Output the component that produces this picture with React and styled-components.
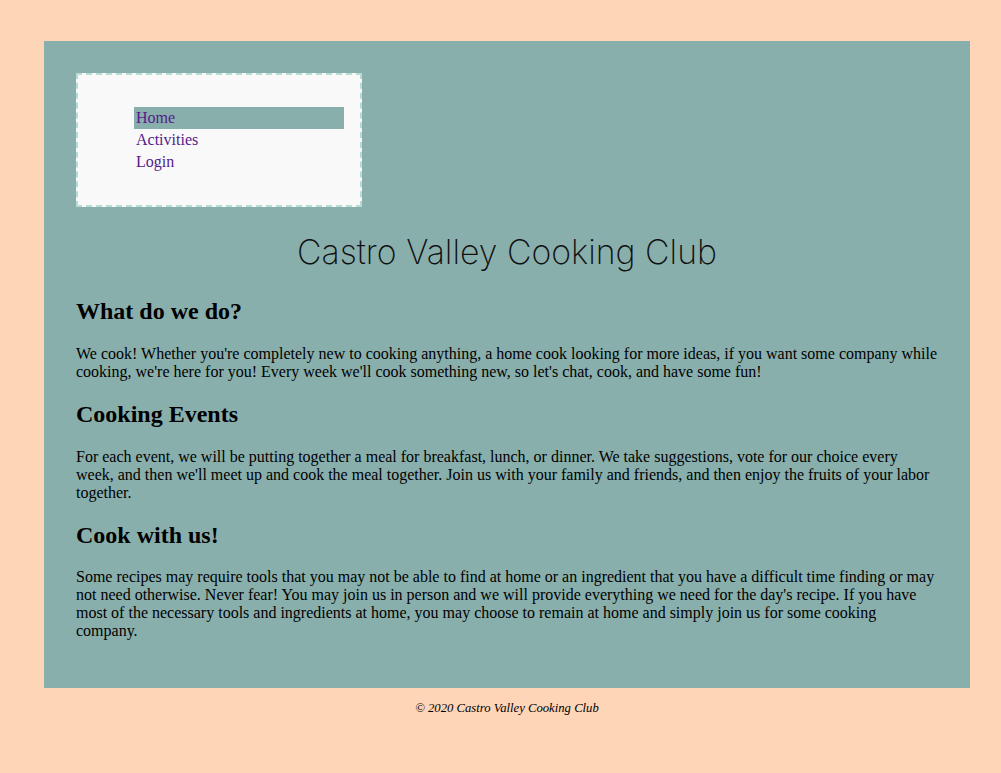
import React from "react";
import styled, { createGlobalStyle } from "styled-components";

const Global = createGlobalStyle`
  html, body { margin: 0; padding: 0; }
  body {
    margin: 8px;
    background: #ffd5b8;
    font-family: "Liberation Serif", "Times New Roman", serif;
    color: #000;
  }
`;

const Main = styled.main`
  margin: 33px 23px 0 36px;
  padding: 32px;
  background: #89afad;
`;

const NavBox = styled.nav`
  width: 250px;
  padding: 16px;
  background: #f9f9f9;
  border: 2px dashed #b6ddd5;
`;

const NavList = styled.ul`
  list-style: none;
  margin: 16px 0;
  padding: 0 0 0 40px;
`;

const NavItem = styled.li`
  height: 22px;
  line-height: 22px;
  padding-left: 2px;
  background: ${(p) => (p.$active ? "#89afad" : "transparent")};
`;

const NavLink = styled.a`
  color: #551a8b;
  text-decoration: none;
  font-size: 16px;
`;

const Title = styled.h1`
  margin: 20px 0 0;
  padding-bottom: 1px;
  line-height: 50px;
  text-align: center;
  font-family: Inter, "Open Sans", sans-serif;
  font-weight: 250;
  font-size: 33.8px;
  color: #111;
`;

const Heading = styled.h2`
  font-size: 24px;
  font-weight: bold;
  margin: 19.92px 0;
`;

const Para = styled.p`
  font-size: 16px;
  margin: 16px 0;
  line-height: normal;
`;

const Footer = styled.footer`
  text-align: center;
  margin: 13px 23px 13px 36px;
  font-style: italic;
  font-size: 12.7px;
`;

const sections = [
  {
    title: "What do we do?",
    text: "We cook! Whether you're completely new to cooking anything, a home cook looking for more ideas, if you want some company while cooking, we're here for you! Every week we'll cook something new, so let's chat, cook, and have some fun!",
  },
  {
    title: "Cooking Events",
    text: "For each event, we will be putting together a meal for breakfast, lunch, or dinner. We take suggestions, vote for our choice every week, and then we'll meet up and cook the meal together. Join us with your family and friends, and then enjoy the fruits of your labor together.",
  },
  {
    title: "Cook with us!",
    text: "Some recipes may require tools that you may not be able to find at home or an ingredient that you have a difficult time finding or may not need otherwise. Never fear! You may join us in person and we will provide everything we need for the day's recipe. If you have most of the necessary tools and ingredients at home, you may choose to remain at home and simply join us for some cooking company.",
  },
];

export default function App() {
  return (
    <>
      <Global />
      <Main>
        <NavBox>
          <NavList>
            <NavItem $active><NavLink href="#">Home</NavLink></NavItem>
            <NavItem><NavLink href="#">Activities</NavLink></NavItem>
            <NavItem><NavLink href="#">Login</NavLink></NavItem>
          </NavList>
        </NavBox>
        <Title>Castro Valley Cooking Club</Title>
        {sections.map((s) => (
          <section key={s.title}>
            <Heading>{s.title}</Heading>
            <Para>{s.text}</Para>
          </section>
        ))}
      </Main>
      <Footer>© 2020 Castro Valley Cooking Club</Footer>
    </>
  );
}
